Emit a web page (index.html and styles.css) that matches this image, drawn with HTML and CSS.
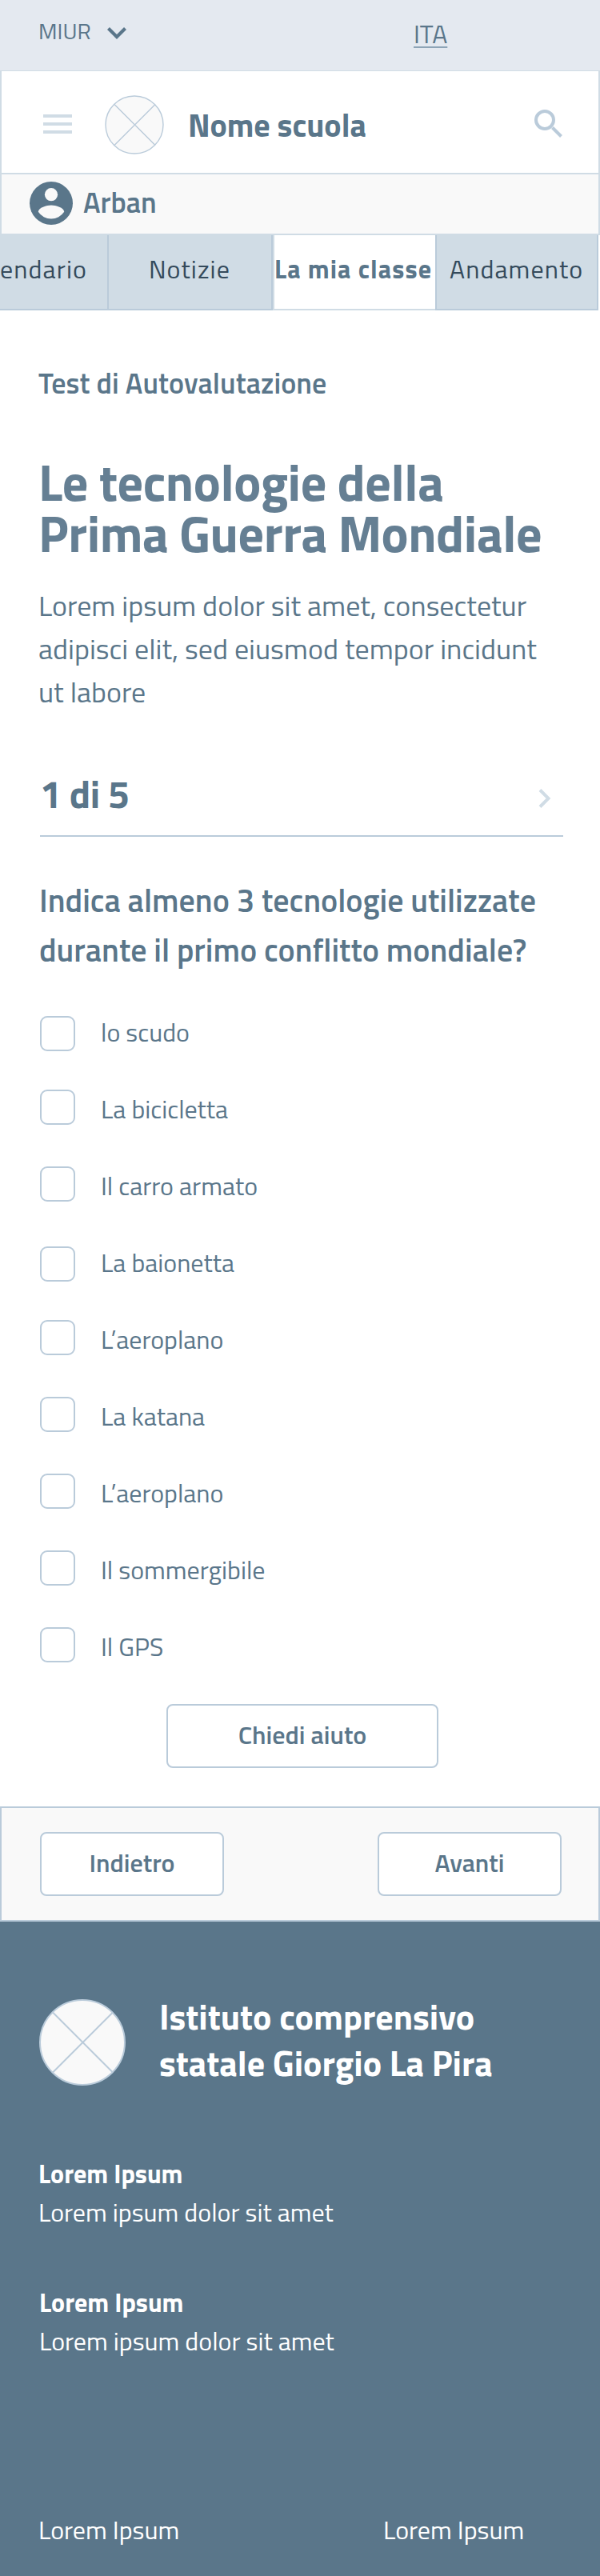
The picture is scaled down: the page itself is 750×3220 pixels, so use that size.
FILE: index.html
```html
<!DOCTYPE html>
<html lang="it">
<head>
<meta charset="utf-8">
<title>Test di Autovalutazione</title>
<link rel="stylesheet" href="styles.css">
</head>
<body>
<div class="topbar">
  <span class="topbar-org">MIUR</span>
  <svg class="topbar-chevron" width="24" height="15" viewBox="0 0 24 15"><path d="M1.500 1.500 12 12 22.500 1.500" fill="none" stroke="#5a768a" stroke-width="4.200"/></svg>
  <span class="topbar-lang">ITA</span>
</div>
<header class="header">
  <svg class="menu-icon" width="36" height="24" viewBox="0 0 36 24"><path d="M0 2h36M0 12h36M0 22h36" stroke="#d0dce5" stroke-width="4"/></svg>
  <svg class="school-logo" width="74" height="74" viewBox="0 0 74 74"><g fill="#f9f9f9" stroke="#bacbda" stroke-width="1.400"><circle cx="37" cy="37" r="36"/><path d="M12 11.500 63 62.500M63 11.500 12 62.500"/></g></svg>
  <span class="school-name">Nome scuola</span>
  <svg class="search-icon" width="36" height="36" viewBox="0 0 36 36"><g fill="none" stroke="#bacbda" stroke-width="4"><circle cx="13" cy="13" r="11"/><path d="m22.500 22.500 11 11"/></g></svg>
</header>
<div class="userbar">
  <svg width="54" height="54" viewBox="0 0 54 54"><circle cx="27" cy="27" r="27" fill="#5a768a"/><circle cx="27" cy="16.200" r="8.100" fill="#f9f9f9"/><path d="M10.800 37.800C10.900 32.400 21.600 29.400 27 29.400S43.100 32.400 43.200 37.800A19.400 19.400 0 0 1 10.800 37.800Z" fill="#f9f9f9"/></svg>
  <span class="user-name">Arban</span>
</div>
<nav class="tabs">
  <span class="tab tab-first">endario</span>
  <span class="tab tab-news">Notizie</span>
  <span class="tab tab-active">La mia classe</span>
  <span class="tab tab-last">Andamento</span>
</nav>
<main class="content">
  <p class="kicker">Test di Autovalutazione</p>
  <h1 class="title">Le tecnologie della<br>Prima Guerra Mondiale</h1>
  <p class="intro">Lorem ipsum dolor sit amet, consectetur<br>adipisci elit, sed eiusmod tempor incidunt<br>ut labore</p>
  <div class="progress">
    <span>1 di 5</span>
    <svg width="16" height="24" viewBox="0 0 16 24"><path d="M2 1.500 12.500 12 2 22.500" fill="none" stroke="#d0dce5" stroke-width="4"/></svg>
  </div>
  <h2 class="question">Indica almeno 3 tecnologie utilizzate<br>durante il primo conflitto mondiale?</h2>
  <ul class="options">
    <li class="option option-low"><i class="box"></i>lo scudo</li>
    <li class="option"><i class="box"></i>La bicicletta</li>
    <li class="option"><i class="box"></i>Il carro armato</li>
    <li class="option option-low"><i class="box"></i>La baionetta</li>
    <li class="option"><i class="box"></i>L’aeroplano</li>
    <li class="option"><i class="box"></i>La katana</li>
    <li class="option"><i class="box"></i>L’aeroplano</li>
    <li class="option"><i class="box"></i>Il sommergibile</li>
    <li class="option"><i class="box"></i>Il GPS</li>
  </ul>
  <button class="button button-help">Chiedi aiuto</button>
</main>
<div class="actions">
  <button class="button button-back">Indietro</button>
  <button class="button button-next">Avanti</button>
</div>
<footer class="footer">
  <div class="brand">
    <svg class="brand-logo" width="108" height="108" viewBox="0 0 108 108"><g fill="#f9f9f9" stroke="#bacbda" stroke-width="2"><circle cx="54" cy="54" r="53"/><path d="M17 16.500 92 91.500M92 16.500 17 91.500"/></g></svg>
    <p class="brand-name">Istituto comprensivo<br>statale Giorgio La Pira</p>
  </div>
  <div class="contact"><strong>Lorem Ipsum</strong><span>Lorem ipsum dolor sit amet</span></div>
  <div class="contact contact-second"><strong>Lorem Ipsum</strong><span>Lorem ipsum dolor sit amet</span></div>
  <div class="footer-links"><span>Lorem Ipsum</span><span>Lorem Ipsum</span></div>
</footer>
</body>
</html>
```

FILE: styles.css
```css
* { box-sizing: border-box; margin: 0; padding: 0; }
body { width: 750px; background: #fff; color: #5a768a; font: 32px "Titillium Web", Roboto, sans-serif; white-space: nowrap; }
svg { display: block; flex: none; }

.topbar { display: flex; align-items: flex-start; height: 88px; background: #e4e9f0; }
.topbar-org { width: 86px; margin-left: 48px; font-size: 28px; line-height: 77px; }
.topbar-chevron { margin-top: 34px; }
.topbar-lang { margin-left: 359px; line-height: 84px; text-decoration: underline; text-decoration-color: #8da4b6; text-decoration-thickness: 2px; text-underline-offset: 4px; text-decoration-skip-ink: none; }

.header { display: flex; align-items: flex-start; height: 130px; border: 2px solid #d0dce5; border-top-width: 1px; background: #fff; }
.menu-icon { margin: 54px 0 0 52px; }
.school-logo { margin: 30px 0 0 41px; }
.school-name { width: 431px; margin-left: 30px; font-size: 40px; font-weight: 700; line-height: 135px; }
.search-icon { margin: 48px 0 0 2px; }

.userbar { display: flex; align-items: flex-start; height: 76px; padding: 9px 0 0 35px; border: 2px solid #d0dce5; border-top: 0; background: #f9f9f9; }
.user-name { margin-left: 13px; font-size: 36px; font-weight: 600; line-height: 52px; }

.tabs { display: flex; height: 94px; margin-right: 2px; }
.tab { flex: none; border: 0 solid #bacbda; border-bottom-width: 2px; background: #d0dce5; color: #344a5b; line-height: 84px; letter-spacing: 1.1px; }
.tab-first { width: 136px; border-right-width: 2px; }
.tab-news { width: 205px; padding-left: 50px; border-right-width: 2px; }
.tab-active { width: 203px; border-color: #d0dce5; border-left-width: 2px; background: #fff; color: #5a768a; font-weight: 700; }
.tab-last { width: 204px; padding-left: 16px; border-left-width: 2px; border-right-width: 2px; }

.content { display: flex; flex-direction: column; padding: 71px 46px 48px 48px; }
.kicker { font-size: 36px; font-weight: 600; line-height: 40px; letter-spacing: 0.09px; }
.title { margin: 71px 0 0; color: #657f93; font-size: 64px; font-weight: 700; line-height: 64px; letter-spacing: -0.43px; }
.intro { margin-top: 32px; font-size: 36px; line-height: 54px; }
.progress { display: flex; justify-content: space-between; height: 81px; margin: 73px 0 0 2px; padding-right: 15px; border-bottom: 2px solid #bacbda; font-size: 48px; font-weight: 700; line-height: 56px; letter-spacing: -0.35px; }
.progress svg { margin-top: 21px; }
.question { margin: 49px 0 24px 1px; font-size: 40px; font-weight: 600; line-height: 62px; }
.options { list-style: none; }
.option { display: flex; align-items: flex-start; height: 96px; padding-left: 2px; line-height: 94px; }
.box { width: 44px; height: 44px; margin: 23px 32px 0 0; border: 2px solid #bacbda; border-radius: 9px; background: #fff; }
.option-low .box { margin-top: 27px; }

.button { height: 80px; padding-bottom: 4px; border: 2px solid #bacbda; border-radius: 8px; background: #fff; color: #5a768a; font: 600 32px/72px "Titillium Web", Roboto, sans-serif; }
.button-help { width: 340px; margin: 23px 0 0 160px; }
.actions { display: flex; justify-content: space-between; height: 144px; padding: 30px 46px 0 46px; border: 2px solid #bacbda; background: #f9f9f9; }
.actions { padding-left: 48px; }
.button-back, .button-next { width: 230px; }

.footer { height: 818px; padding: 93px 48px 0; background: #5a768a; color: #fff; }
.brand { display: flex; align-items: flex-start; padding-left: 1px; }
.brand-logo { margin-top: 4px; }
.brand-name { margin: -3px 0 0 42px; font-size: 44px; font-weight: 700; line-height: 58px; }
.contact { display: flex; flex-direction: column; margin-top: 85px; line-height: 48px; }
.contact-second { margin: 65px 0 0 1px; }
.footer-links { display: grid; grid-template-columns: 431px auto; margin-top: 188px; line-height: 48px; }
```
